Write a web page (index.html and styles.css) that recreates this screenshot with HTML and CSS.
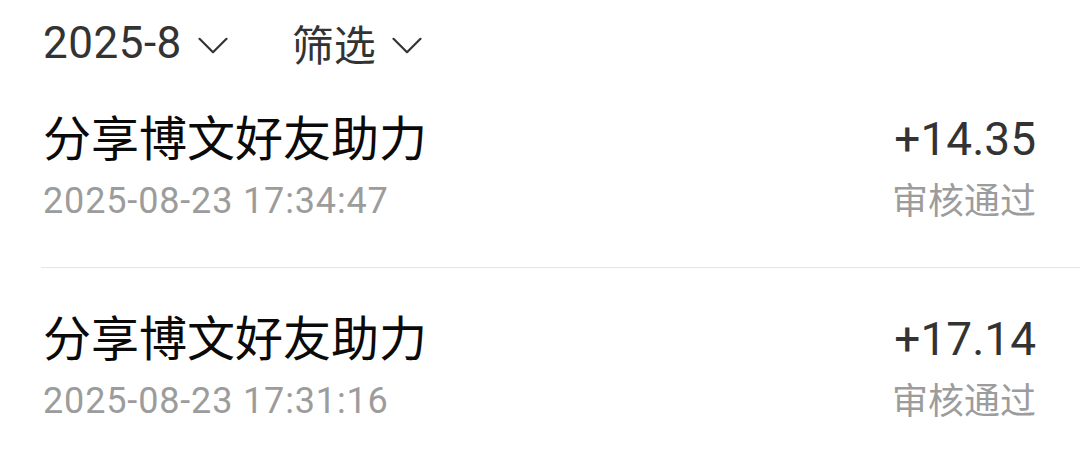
FILE: index.html
```html
<!DOCTYPE html>
<html lang="zh-CN">
<head>
<meta charset="utf-8">
<link rel="stylesheet" href="styles.css">
</head>
<body>
<div class="page">
  <div class="toolbar">
    <div class="picker">
      <span class="picker-label">2025-8</span>
      <svg class="chev" width="30" height="17" viewBox="0 0 30 17"><path d="M1.5 1.8 L15 15.2 L28.5 1.8" fill="none" stroke="#333" stroke-width="2.2" stroke-linecap="round" stroke-linejoin="round"/></svg>
    </div>
    <div class="picker">
      <span class="picker-label cjk">筛选</span>
      <svg class="chev" width="30" height="17" viewBox="0 0 30 17"><path d="M1.5 1.8 L15 15.2 L28.5 1.8" fill="none" stroke="#333" stroke-width="2.2" stroke-linecap="round" stroke-linejoin="round"/></svg>
    </div>
  </div>
  <ul class="list">
    <li class="item">
      <div class="left">
        <div class="title">分享博文好友助力</div>
        <div class="time">2025-08-23 17:34:47</div>
      </div>
      <div class="right">
        <div class="amount">+14.35</div>
        <div class="status">审核通过</div>
      </div>
    </li>
    <li class="item">
      <div class="left">
        <div class="title">分享博文好友助力</div>
        <div class="time">2025-08-23 17:31:16</div>
      </div>
      <div class="right">
        <div class="amount">+17.14</div>
        <div class="status">审核通过</div>
      </div>
    </li>
  </ul>
</div>
</body>
</html>
```
FILE: styles.css
```css
html, body {
  margin: 0;
  padding: 0;
  background: #ffffff;
}
.page {
  width: 1080px;
  height: 456px;
  overflow: hidden;
  font-family: "Roboto", "Noto Sans CJK SC", sans-serif;
}
.toolbar {
  display: flex;
  align-items: center;
  gap: 64px;
  padding: 18px 0 0 43px;
  height: 50px;
}
.picker {
  display: flex;
  align-items: center;
  gap: 16px;
  color: #333333;
}
.picker-label {
  font-size: 44px;
  line-height: 52px;
  letter-spacing: 0.5px;
}
.picker-label.cjk {
  font-family: "Noto Sans CJK SC", sans-serif;
  font-size: 42px;
  letter-spacing: 0;
}
.chev {
  display: block;
  margin-top: 4px;
}
.list {
  list-style: none;
  margin: 0;
  padding: 0;
}
.item {
  display: flex;
  justify-content: space-between;
  align-items: flex-start;
  margin-left: 41px;
  padding: 35px 44px 0 2px;
  height: 164px;
  border-bottom: 1px solid #e6e6e6;
}
.item:last-child {
  border-bottom: none;
}
.title {
  font-family: "Noto Sans CJK SC", sans-serif;
  font-size: 48px;
  line-height: 64px;
  color: #0a0a0a;
}
.time {
  margin-top: 11px;
  font-size: 36px;
  line-height: 46px;
  letter-spacing: 0.85px;
  color: #9c9c9c;
}
.right {
  text-align: right;
}
.amount {
  margin-top: 6px;
  font-size: 46px;
  line-height: 60px;
  color: #333333;
}
.status {
  margin-top: 4px;
  font-family: "Noto Sans CJK SC", sans-serif;
  font-size: 36px;
  line-height: 50px;
  color: #9c9c9c;
}
```
